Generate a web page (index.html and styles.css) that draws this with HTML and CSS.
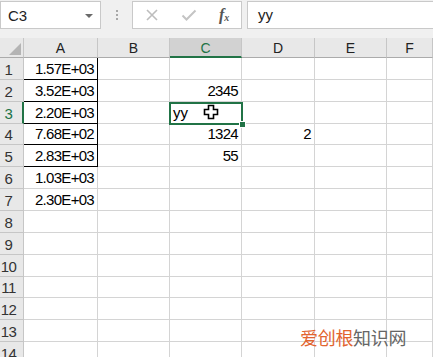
FILE: index.html
```html
<!DOCTYPE html>
<html>
<head>
<meta charset="utf-8">
<link rel="stylesheet" href="styles.css">
</head>
<body>
<div class="app">
  <div class="toolbar">
    <div class="namebox"><span class="nb-text">C3</span><span class="nb-arrow"></span></div>
    <div class="dots"><i></i><i></i><i></i></div>
    <div class="fbtns">
      <svg class="ic ic-x" width="14" height="14" viewBox="0 0 14 14"><path d="M2 2 L12 12 M12 2 L2 12" stroke="#bdbdbd" stroke-width="1.6" fill="none"/></svg>
      <svg class="ic ic-ok" width="16" height="14" viewBox="0 0 16 14"><path d="M1.5 7.5 L5.5 11.5 L14.5 2.5" stroke="#c4c4c4" stroke-width="2" fill="none"/></svg>
      <span class="fx">f<sub>x</sub></span>
    </div>
    <div class="finput">yy</div>
  </div>
  <div class="sheet">
    <div class="corner"><span class="tri"></span></div>
    <div class="ch">A</div><div class="ch">B</div><div class="ch ch-sel">C</div><div class="ch">D</div><div class="ch">E</div><div class="ch">F</div>

    <div class="rh">1</div><div class="c num bx">1.57E+03</div><div class="c"></div><div class="c"></div><div class="c"></div><div class="c"></div><div class="c"></div>
    <div class="rh">2</div><div class="c num bx">3.52E+03</div><div class="c"></div><div class="c num">2345</div><div class="c"></div><div class="c"></div><div class="c"></div>
    <div class="rh rh-sel">3</div><div class="c num bx">2.20E+03</div><div class="c"></div><div class="c txt">yy</div><div class="c"></div><div class="c"></div><div class="c"></div>
    <div class="rh">4</div><div class="c num bx">7.68E+02</div><div class="c"></div><div class="c num">1324</div><div class="c num">2</div><div class="c"></div><div class="c"></div>
    <div class="rh">5</div><div class="c num bx">2.83E+03</div><div class="c"></div><div class="c num">55</div><div class="c"></div><div class="c"></div><div class="c"></div>
    <div class="rh">6</div><div class="c num">1.03E+03</div><div class="c"></div><div class="c"></div><div class="c"></div><div class="c"></div><div class="c"></div>
    <div class="rh">7</div><div class="c num">2.30E+03</div><div class="c"></div><div class="c"></div><div class="c"></div><div class="c"></div><div class="c"></div>
    <div class="rh">8</div><div class="c"></div><div class="c"></div><div class="c"></div><div class="c"></div><div class="c"></div><div class="c"></div>
    <div class="rh">9</div><div class="c"></div><div class="c"></div><div class="c"></div><div class="c"></div><div class="c"></div><div class="c"></div>
    <div class="rh">10</div><div class="c"></div><div class="c"></div><div class="c"></div><div class="c"></div><div class="c"></div><div class="c"></div>
    <div class="rh">11</div><div class="c"></div><div class="c"></div><div class="c"></div><div class="c"></div><div class="c"></div><div class="c"></div>
    <div class="rh">12</div><div class="c"></div><div class="c"></div><div class="c"></div><div class="c"></div><div class="c"></div><div class="c"></div>
    <div class="rh">13</div><div class="c"></div><div class="c"></div><div class="c"></div><div class="c"></div><div class="c"></div><div class="c"></div>
    <div class="rh">14</div><div class="c"></div><div class="c"></div><div class="c"></div><div class="c"></div><div class="c"></div><div class="c"></div>

    <div class="selbox"><span class="handle"></span></div>
    <svg class="cursor" width="16" height="16" viewBox="0 0 16 16"><path d="M5.5 1.5 H10.5 V5.5 H14.5 V10.5 H10.5 V14.5 H5.5 V10.5 H1.5 V5.5 H5.5 Z" fill="#fff" stroke="#000" stroke-width="1.6"/></svg>
  </div>
  <div class="wm"><span class="wm-o">爱创根</span><span class="wm-g">知识网</span></div>
</div>
</body>
</html>
```
FILE: styles.css
```css
html, body { margin: 0; padding: 0; }
body {
  width: 433px;
  height: 357px;
  overflow: hidden;
  background: #f0f0f0;
  font-family: "Liberation Sans", Arial, sans-serif;
}
.app { position: relative; width: 433px; height: 357px; overflow: hidden; }

.toolbar {
  display: flex;
  align-items: flex-start;
  height: 38px;
  padding-top: 1px;
  box-sizing: border-box;
}
.namebox {
  box-sizing: border-box;
  width: 101px;
  height: 28px;
  background: #fff;
  border: 1px solid #c9c9c9;
  display: flex;
  align-items: center;
  justify-content: space-between;
  padding: 0 7px 0 7px;
}
.nb-text { font-size: 15px; color: #222; }
.nb-arrow {
  width: 0; height: 0;
  border-left: 4px solid transparent;
  border-right: 4px solid transparent;
  border-top: 4px solid #6a6a6a;
  margin-top: 1px;
}
.dots {
  width: 31px;
  height: 28px;
  display: flex;
  flex-direction: column;
  align-items: center;
  justify-content: center;
  gap: 2px;
}
.dots i { display: block; width: 2px; height: 2px; background: #a8a8a8; }
.fbtns {
  box-sizing: border-box;
  width: 110px;
  height: 28px;
  background: #fff;
  border: 1px solid #c9c9c9;
  display: flex;
  align-items: center;
  padding-left: 12px;
}
.ic-x { margin-right: 22px; }
.ic-ok { margin-right: 22px; }
.fx {
  font-family: "Liberation Serif", serif;
  font-style: italic;
  font-size: 16px;
  color: #555;
  font-weight: bold;
  line-height: 1;
}
.fx sub { font-size: 10px; vertical-align: -1px; }
.finput {
  box-sizing: border-box;
  margin-left: 5px;
  flex: 1;
  height: 28px;
  background: #fff;
  border: 1px solid #c9c9c9;
  border-right: none;
  font-size: 15px;
  color: #222;
  padding: 4px 0 0 10px;
}

.sheet {
  position: relative;
  display: grid;
  grid-template-columns: 24px 74px 72px 72px 73px 72px 1fr;
  grid-template-rows: 20px repeat(14, 21.86px);
  background: #fff;
}
.corner {
  background: #e8e8e8;
  border-bottom: 1px solid #ababab;
  border-right: 1px solid #c6c6c6;
  position: relative;
}
.tri {
  position: absolute;
  right: 2px;
  bottom: 2px;
  width: 0; height: 0;
  border-left: 12px solid transparent;
  border-bottom: 12px solid #b4b4b4;
}
.ch {
  background: #e8e8e8;
  border-bottom: 1px solid #ababab;
  border-right: 1px solid #c6c6c6;
  display: flex;
  align-items: flex-end;
  justify-content: center;
  font-size: 14px;
  color: #222;
  padding-bottom: 1px;
  box-sizing: border-box;
}
.ch-sel {
  background: #d2d2d2;
  color: #217346;
  border-bottom: 2px solid #217346;
  padding-bottom: 0;
}
.rh {
  background: #e8e8e8;
  border-right: 1px solid #c6c6c6;
  border-bottom: 1px solid #c6c6c6;
  box-sizing: border-box;
  display: flex;
  align-items: flex-end;
  justify-content: center;
  padding-right: 6px;
  padding-bottom: 1px;
  font-size: 15px;
  letter-spacing: -0.5px;
  color: #333;
}
.rh-sel { color: #217346; border-right: 2px solid #217346; padding-right: 5px; }
.c {
  box-sizing: border-box;
  border-right: 1px solid #d4d4d4;
  border-bottom: 1px solid #d4d4d4;
  display: flex;
  align-items: flex-end;
  font-size: 15px;
  color: #000;
  padding: 0 2px 2px 2px;
  line-height: 17px;
}
.num { justify-content: flex-end; letter-spacing: -0.7px; padding-right: 3px; }
.txt { justify-content: flex-start; padding-left: 3px; }
.bx { border-right-color: #000; border-bottom-color: #000; }

.selbox {
  position: absolute;
  left: 169px;
  top: 63.7px;
  width: 74px;
  height: 23px;
  box-sizing: border-box;
  border: 2px solid #217346;
}
.handle {
  position: absolute;
  right: -5px;
  bottom: -5px;
  width: 5px;
  height: 5px;
  background: #217346;
  border: 1px solid #fff;
}
.cursor { position: absolute; left: 203px; top: 66px; }

.wm {
  position: absolute;
  left: 300px;
  top: 326px;
  font-family: "Noto Sans CJK SC", sans-serif;
  font-size: 18px;
  line-height: 22px;
  letter-spacing: -0.3px;
}
.wm-o { color: #e2642f; }
.wm-g { color: #666; }
```
